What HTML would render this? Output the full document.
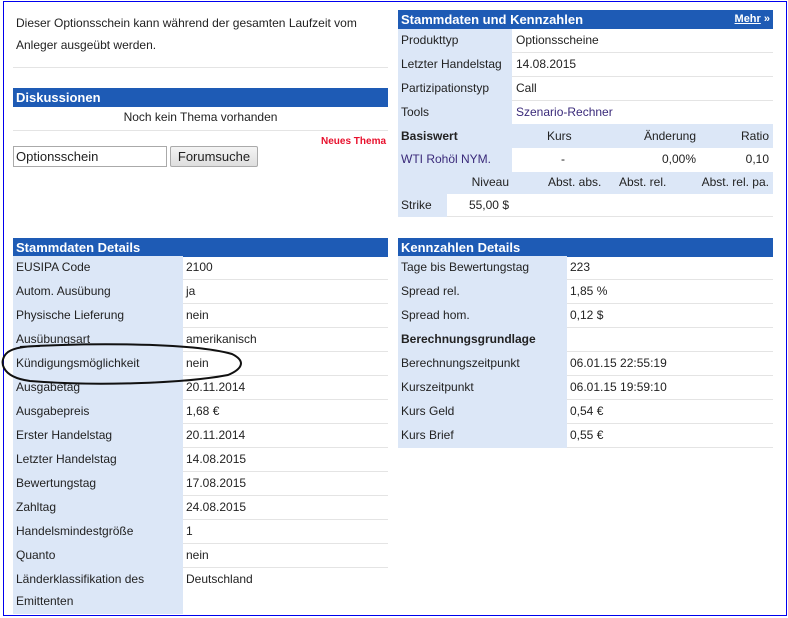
<!DOCTYPE html>
<html><head><meta charset="utf-8"><style>
*{margin:0;padding:0;box-sizing:border-box}
body{width:788px;height:618px;background:#fff;font-family:"Liberation Sans",Arial,sans-serif;font-size:12px;color:#222;position:relative;overflow:hidden}
.frame{position:absolute;left:3px;top:1px;width:784px;height:615px;border:1px solid #0000ee}
.a{position:absolute}
.hd{position:absolute;height:19px;background:#1e5bb5;color:#fff;font-weight:bold;font-size:13px;line-height:19px;padding-left:3px}
.tbl{position:absolute}
.row{position:relative;height:24px;border-bottom:1px solid #e4e4e4;line-height:22px}
.row .l{position:absolute;left:0;top:0;bottom:-1px;background:#dce7f7;padding-left:3px}
.row .v{position:absolute;top:0;padding-left:3px}
.lnk{color:#3a2a7a}
</style></head><body>
<div class="frame"></div>

<div class="a" style="left:16px;top:12px;line-height:22px;width:370px">Dieser Optionsschein kann während der gesamten Laufzeit vom<br>Anleger ausgeübt werden.</div>
<div class="a" style="left:13px;top:67px;width:375px;height:1px;background:#e4e4e4"></div>

<div class="hd" style="left:13px;top:88px;width:375px">Diskussionen</div>
<div class="a" style="left:13px;top:110px;width:375px;text-align:center">Noch kein Thema vorhanden</div>
<div class="a" style="left:13px;top:130px;width:375px;height:1px;background:#e4e4e4"></div>
<div class="a" style="left:321px;top:136px;color:#e8112d;font-weight:bold;font-size:10px">Neues Thema</div>
<div class="a" style="left:13px;top:146px;width:154px;height:21px;border:1px solid #aaa;padding-left:2px;line-height:19px;font-size:13px">Optionsschein</div>
<div class="a" style="left:170px;top:146px;width:88px;height:21px;border:1px solid #aaa;border-radius:2px;background:linear-gradient(#f4f4f4,#dedede);text-align:center;line-height:19px;font-size:13px">Forumsuche</div>

<div class="hd" style="left:398px;top:10px;width:375px">Stammdaten und Kennzahlen<span style="position:absolute;right:3px;font-size:11px"><u>Mehr</u> »</span></div>
<div class="tbl" style="left:398px;top:29px;width:375px">
<div class="row"><div class="l" style="width:114px">Produkttyp</div><div class="v" style="left:115px">Optionsscheine</div></div>
<div class="row"><div class="l" style="width:114px">Letzter Handelstag</div><div class="v" style="left:115px">14.08.2015</div></div>
<div class="row"><div class="l" style="width:114px">Partizipationstyp</div><div class="v" style="left:115px">Call</div></div>
<div class="row" style="border:0"><div class="l" style="width:114px">Tools</div><div class="v lnk" style="left:115px">Szenario-Rechner</div></div>
</div>
<div class="a" style="left:398px;top:124px;width:375px;height:24px;background:#dce7f7;line-height:24px">
<span class="a" style="left:3px;font-weight:bold">Basiswert</span><span class="a" style="left:149px">Kurs</span><span class="a" style="right:77px">Änderung</span><span class="a" style="right:4px">Ratio</span></div>
<div class="a" style="left:398px;top:148px;width:375px;height:24px;line-height:22px">
<div class="a lnk" style="left:0;width:114px;height:24px;background:#dce7f7;padding-left:3px">WTI Rohöl NYM.</div>
<span class="a" style="left:163px">-</span><span class="a" style="right:77px">0,00%</span><span class="a" style="right:4px">0,10</span></div>
<div class="a" style="left:398px;top:172px;width:375px;height:22px;background:#dce7f7;line-height:20px">
<span class="a" style="right:264px">Niveau</span><span class="a" style="left:150px">Abst. abs.</span><span class="a" style="left:221px">Abst. rel.</span><span class="a" style="right:4px">Abst. rel. pa.</span></div>
<div class="a" style="left:398px;top:194px;width:375px;height:23px;border-bottom:1px solid #e4e4e4;line-height:22px">
<div class="a" style="left:0;width:49px;height:23px;background:#dce7f7;padding-left:3px">Strike</div><span class="a" style="right:264px">55,00 $</span></div>

<div class="hd" style="left:13px;top:238px;width:375px">Stammdaten Details</div>
<div class="tbl" style="left:13px;top:256px;width:375px">
<div class="row"><div class="l" style="width:170px">EUSIPA Code</div><div class="v" style="left:170px">2100</div></div>
<div class="row"><div class="l" style="width:170px">Autom. Ausübung</div><div class="v" style="left:170px">ja</div></div>
<div class="row"><div class="l" style="width:170px">Physische Lieferung</div><div class="v" style="left:170px">nein</div></div>
<div class="row"><div class="l" style="width:170px">Ausübungsart</div><div class="v" style="left:170px">amerikanisch</div></div>
<div class="row"><div class="l" style="width:170px">Kündigungsmöglichkeit</div><div class="v" style="left:170px">nein</div></div>
<div class="row"><div class="l" style="width:170px">Ausgabetag</div><div class="v" style="left:170px">20.11.2014</div></div>
<div class="row"><div class="l" style="width:170px">Ausgabepreis</div><div class="v" style="left:170px">1,68 €</div></div>
<div class="row"><div class="l" style="width:170px">Erster Handelstag</div><div class="v" style="left:170px">20.11.2014</div></div>
<div class="row"><div class="l" style="width:170px">Letzter Handelstag</div><div class="v" style="left:170px">14.08.2015</div></div>
<div class="row"><div class="l" style="width:170px">Bewertungstag</div><div class="v" style="left:170px">17.08.2015</div></div>
<div class="row"><div class="l" style="width:170px">Zahltag</div><div class="v" style="left:170px">24.08.2015</div></div>
<div class="row"><div class="l" style="width:170px">Handelsmindestgröße</div><div class="v" style="left:170px">1</div></div>
<div class="row"><div class="l" style="width:170px">Quanto</div><div class="v" style="left:170px">nein</div></div>
<div class="row" style="height:45px;border:0"><div class="l" style="width:170px">Länderklassifikation des<br>Emittenten</div><div class="v" style="left:170px">Deutschland</div></div>
</div>

<div class="hd" style="left:398px;top:238px;width:375px">Kennzahlen Details</div>
<div class="tbl" style="left:398px;top:256px;width:375px">
<div class="row"><div class="l" style="width:169px">Tage bis Bewertungstag</div><div class="v" style="left:169px">223</div></div>
<div class="row"><div class="l" style="width:169px">Spread rel.</div><div class="v" style="left:169px">1,85 %</div></div>
<div class="row"><div class="l" style="width:169px">Spread hom.</div><div class="v" style="left:169px">0,12 $</div></div>
<div class="row"><div class="l" style="width:169px;font-weight:bold">Berechnungsgrundlage</div></div>
<div class="row"><div class="l" style="width:169px">Berechnungszeitpunkt</div><div class="v" style="left:169px">06.01.15 22:55:19</div></div>
<div class="row"><div class="l" style="width:169px">Kurszeitpunkt</div><div class="v" style="left:169px">06.01.15 19:59:10</div></div>
<div class="row"><div class="l" style="width:169px">Kurs Geld</div><div class="v" style="left:169px">0,54 €</div></div>
<div class="row"><div class="l" style="width:169px">Kurs Brief</div><div class="v" style="left:169px">0,55 €</div></div>
</div>

<svg class="a" style="left:0;top:340px" width="260" height="50"><path d="M20 7 C80 3 190 2 232 14 C248 22 240 30 228 35 C180 44 90 46 30 41 C0 37 -2 20 8 12 C14 8 24 6 40 6" fill="none" stroke="#111" stroke-width="2"/></svg>
</body></html>
